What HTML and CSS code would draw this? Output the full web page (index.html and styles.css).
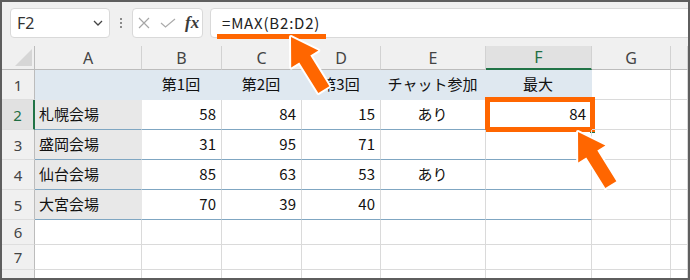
FILE: index.html
```html
<!doctype html>
<html>
<head>
  <meta charset="utf-8">
  <title>MAX</title>
  <link rel="stylesheet" href="styles.css">
</head>
<body>

<div class="frame">

  <!-- formula bar -->
  <div class="toolbar">
    <div class="namebox">
      <span>F2</span>
      <svg width="10" height="6" viewBox="0 0 10 6"><polyline points="1,1 5,5 9,1" fill="none" stroke="#444" stroke-width="1.3"/></svg>
    </div>
    <div class="dots"><i></i><i></i><i></i></div>
    <div class="fxbox">
      <svg class="cancel" width="12" height="12" viewBox="0 0 12 12"><path d="M1 1L11 11M11 1L1 11" stroke="#a6a6a6" stroke-width="1.2"/></svg>
      <svg class="enter" width="16" height="10" viewBox="0 0 16 10"><polyline points="1,5 5.5,9 15,1" fill="none" stroke="#ababab" stroke-width="1.2"/></svg>
      <span class="fx">fx</span>
    </div>
    <div class="formula">
      <span>=MAX(B2:D2)</span>
      <div class="mark"></div>
    </div>
  </div>

  <!-- sheet -->
  <div class="sheet">
    <div class="c corner"><svg width="17" height="17" viewBox="0 0 17 17"><polygon points="0,17 17,17 17,0" fill="#d6d6d6"/></svg></div>
    <div class="c ch">A</div>
    <div class="c ch">B</div>
    <div class="c ch">C</div>
    <div class="c ch">D</div>
    <div class="c ch">E</div>
    <div class="c ch sel">F</div>
    <div class="c ch">G</div>
    <div class="c ch"></div>

    <div class="c rh">1</div>
    <div class="c th"></div>
    <div class="c th">第1回</div>
    <div class="c th">第2回</div>
    <div class="c th">第3回</div>
    <div class="c th">チャット参加</div>
    <div class="c th">最大</div>
    <div class="c"></div>
    <div class="c"></div>

    <div class="c rh sel">2</div>
    <div class="c nm">札幌会場</div>
    <div class="c n">58</div>
    <div class="c n">84</div>
    <div class="c n">15</div>
    <div class="c t">あり</div>
    <div class="c n active">84<span class="handle"></span><span class="box"></span></div>
    <div class="c"></div>
    <div class="c"></div>

    <div class="c rh">3</div>
    <div class="c nm">盛岡会場</div>
    <div class="c n">31</div>
    <div class="c n">95</div>
    <div class="c n">71</div>
    <div class="c t"></div>
    <div class="c n"></div>
    <div class="c"></div>
    <div class="c"></div>

    <div class="c rh">4</div>
    <div class="c nm">仙台会場</div>
    <div class="c n">85</div>
    <div class="c n">63</div>
    <div class="c n">53</div>
    <div class="c t">あり</div>
    <div class="c n"></div>
    <div class="c"></div>
    <div class="c"></div>

    <div class="c rh">5</div>
    <div class="c nm">大宮会場</div>
    <div class="c n">70</div>
    <div class="c n">39</div>
    <div class="c n">40</div>
    <div class="c t"></div>
    <div class="c n"></div>
    <div class="c"></div>
    <div class="c"></div>

    <div class="c rh">6</div>
    <div class="c"></div><div class="c"></div><div class="c"></div><div class="c"></div>
    <div class="c"></div><div class="c"></div><div class="c"></div><div class="c"></div>

    <div class="c rh">7</div>
    <div class="c"></div><div class="c"></div><div class="c"></div><div class="c"></div>
    <div class="c"></div><div class="c"></div><div class="c"></div><div class="c"></div>

    <div class="c rh">8</div>
    <div class="c"></div><div class="c"></div><div class="c"></div><div class="c"></div>
    <div class="c"></div><div class="c"></div><div class="c"></div><div class="c"></div>
  </div>

  <!-- callout arrows -->
  <svg class="arrows" width="690" height="280" viewBox="0 0 690 280">
    <polygon transform="translate(291,37) rotate(-32)" points="0,0 16,26 6.5,26 6.5,62 -6.5,62 -6.5,26 -16,26"/>
    <polygon transform="translate(578,132) rotate(-32)" points="0,0 16,26 6.5,26 6.5,62 -6.5,62 -6.5,26 -16,26"/>
  </svg>

</div>

</body>
</html>
```

FILE: styles.css
```css
body {
  margin: 0;
  font-family: "Noto Sans CJK JP", "Noto Sans", sans-serif;
}

.frame {
  position: relative;
  width: 690px;
  height: 280px;
  box-sizing: border-box;
  border: 2px solid #5e5e5e;
  overflow: hidden;
  background: #fff;
}

/* formula bar */

.toolbar {
  display: flex;
  align-items: flex-start;
  height: 44px;
  box-sizing: border-box;
  padding: 6px 0 0 8px;
  background: #f0f0f0;
}

.namebox {
  width: 100px;
  height: 30px;
  box-sizing: border-box;
  border: 1px solid #d9d9d9;
  border-radius: 4px;
  background: #fff;
  display: flex;
  align-items: center;
  justify-content: space-between;
  padding: 0 6px 0 6px;
  font-family: "Noto Sans", sans-serif;
  font-size: 16px;
  color: #333;
}

.dots {
  width: 3px;
  height: 30px;
  margin: 0 9px 0 10px;
  display: flex;
  flex-direction: column;
  justify-content: center;
  gap: 2px;
}

.dots i {
  display: block;
  width: 2px;
  height: 2px;
  background: #8a8a8a;
}

.fxbox {
  width: 71px;
  height: 30px;
  box-sizing: border-box;
  border: 1px solid #d9d9d9;
  border-radius: 4px;
  background: #fff;
  display: flex;
  align-items: center;
  padding-left: 5px;
}

.fxbox .enter {
  margin-left: 10px;
}

.fx {
  margin-left: 9px;
  font-family: "Liberation Serif", serif;
  font-style: italic;
  font-weight: bold;
  font-size: 17px;
  color: #3a3a3a;
}

.formula {
  position: relative;
  flex: 1;
  height: 30px;
  margin: 0 -10px 0 7px;
  box-sizing: border-box;
  border: 1px solid #d9d9d9;
  border-radius: 4px 0 0 4px;
  background: #fff;
  display: flex;
  align-items: center;
  padding: 0 0 2px 11px;
  font-size: 15px;
  letter-spacing: 0.8px;
  color: #222;
}

.formula .mark {
  position: absolute;
  left: 6px;
  top: 25px;
  width: 109px;
  height: 5px;
  background: #ff6600;
}

/* sheet */

.sheet {
  display: grid;
  grid-template-columns: 33px 107px 80px 80px 79px 105px 106px 79px 1fr;
  grid-template-rows: 24px repeat(5, 30px) 25px 25px 25px;
}

.c {
  position: relative;
  box-sizing: border-box;
  border-right: 1px solid #dadada;
  border-bottom: 1px solid #dadada;
  display: flex;
  align-items: center;
  padding: 0 5px 2px 4px;
  font-size: 15px;
  color: #111;
  white-space: nowrap;
}

.corner {
  background: #f0f0f0;
  border-right-color: #bcbcbc;
  border-bottom-color: #bcbcbc;
  justify-content: flex-end;
  align-items: flex-end;
  padding: 0 2px 3px 0;
}

.ch {
  background: #f0f0f0;
  justify-content: center;
  border-right-color: #d2d2d2;
  border-bottom-color: #bcbcbc;
  font-family: "Noto Sans", sans-serif;
  font-size: 16px;
  color: #444;
  padding: 0;
}

.ch.sel {
  background: #e1e1e1;
  border-bottom: 2px solid #217346;
  color: #1f6e43;
}

.rh {
  background: #f0f0f0;
  justify-content: center;
  border-right-color: #bcbcbc;
  border-bottom-color: #dedede;
  font-family: "Noto Sans", sans-serif;
  color: #444;
  padding: 0;
}

.rh.sel {
  background: #e1e1e1;
  border-right: 2px solid #217346;
  color: #1f6e43;
}

.th {
  background: #dfe8f0;
  border-right-color: #dfe8f0;
  border-bottom-color: #dfe8f0;
  justify-content: center;
}

.nm {
  background: #e8e8e8;
  border-right-color: #e8e8e8;
  border-bottom-color: #7fa6c2;
}

.n {
  justify-content: flex-end;
  border-bottom-color: #7fa6c2;
}

.t {
  justify-content: center;
  border-bottom-color: #7fa6c2;
}

.active .handle {
  position: absolute;
  right: -4px;
  bottom: -4px;
  width: 5px;
  height: 5px;
  background: #217346;
}

.active .box {
  position: absolute;
  left: -1px;
  top: -3px;
  width: 110px;
  height: 35px;
  box-sizing: border-box;
  border: 5px solid #ff6600;
}

/* callouts */

.arrows {
  position: absolute;
  left: -2px;
  top: -2px;
  pointer-events: none;
}

.arrows polygon {
  fill: #ff6600;
  stroke: #fff;
  stroke-width: 4;
  paint-order: stroke;
  stroke-linejoin: round;
}
```
